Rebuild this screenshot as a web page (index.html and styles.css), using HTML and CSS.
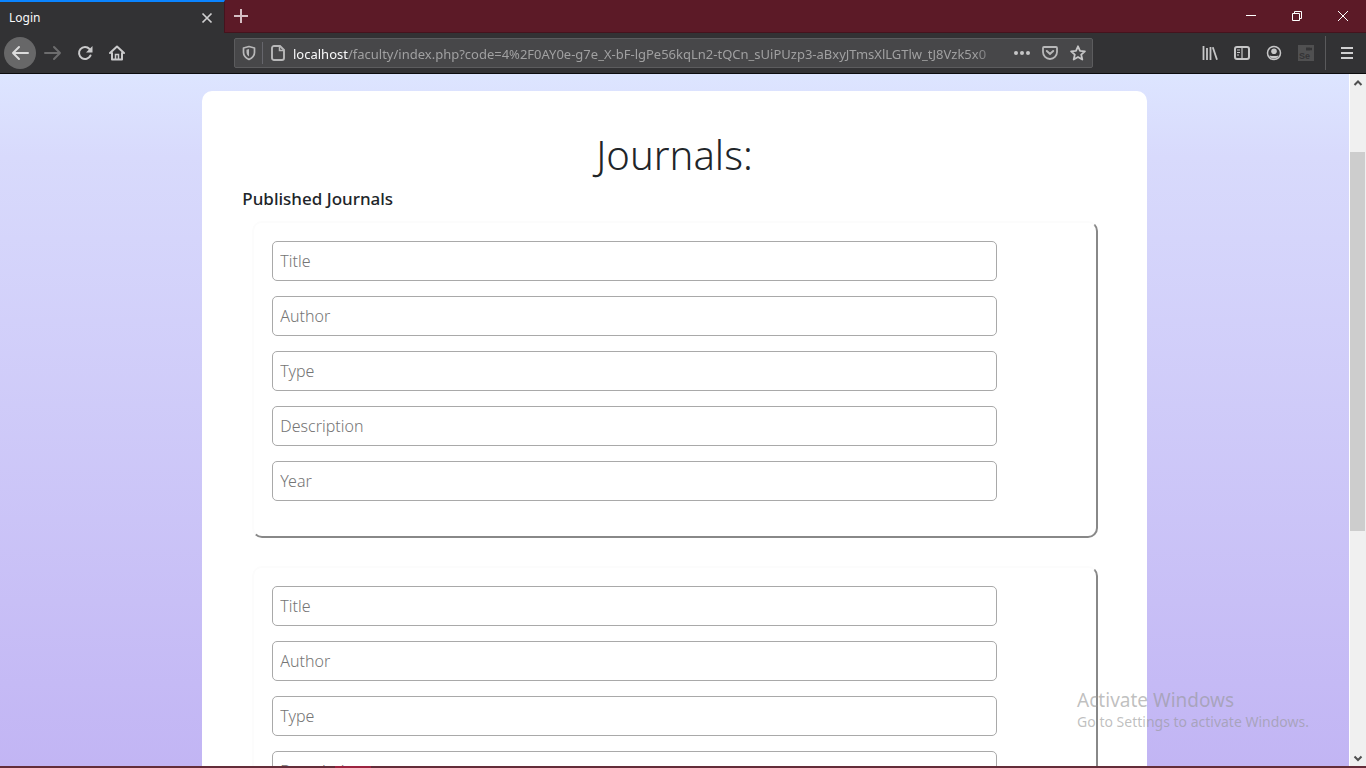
FILE: index.html
```html
<!DOCTYPE html>
<html lang="en">
<head>
<meta charset="utf-8">
<title>Login</title>
<link rel="stylesheet" href="styles.css">
</head>
<body>
<div class="window">
  <header class="titlebar">
    <div class="tab">
      <span class="tab-title">Login</span>
      <button class="tab-close" aria-label="Close tab"><svg width="12" height="12" viewBox="0 0 12 12"><path d="M1.500 1.500l9 9M10.500 1.500l-9 9" stroke="#cfcfd0" stroke-width="1.700" fill="none"/></svg></button>
    </div>
    <button class="new-tab" aria-label="New tab"><svg width="14" height="14" viewBox="0 0 14 14"><path d="M7 0v14M0 7h14" stroke="#d5bfc4" stroke-width="2"/></svg></button>
    <div class="caption">
      <button aria-label="Minimize"><svg width="12" height="12" viewBox="0 0 12 12"><path d="M1 5.500h10" stroke="#fff"/></svg></button>
      <button aria-label="Restore"><svg width="12" height="12" viewBox="0 0 12 12"><path d="M1.500 3.500h7v7h-7zM3.500 3.500v-2h7v7h-2" stroke="#fff" fill="none"/></svg></button>
      <button aria-label="Close"><svg width="12" height="12" viewBox="0 0 12 12"><path d="M1 1l10 10M11 1L1 11" stroke="#fff"/></svg></button>
    </div>
  </header>
  <nav class="toolbar">
    <div class="nav-buttons">
      <button class="back" aria-label="Back"><svg width="18" height="18" viewBox="0 0 18 18"><path d="M17 9H2M8 3L2 9l6 6" stroke="#dcdcdc" stroke-width="2" fill="none" stroke-linecap="round" stroke-linejoin="round"/></svg></button>
      <button aria-label="Forward"><svg width="18" height="18" viewBox="0 0 18 18"><path d="M1 9h15M10 3l6 6-6 6" stroke="#6d6d6e" stroke-width="2" fill="none" stroke-linecap="round" stroke-linejoin="round"/></svg></button>
      <button aria-label="Reload"><svg width="16" height="16" viewBox="0 0 16 16"><path d="M13.500 10.500A6 6 0 1 1 12.500 4" stroke="#cacacb" stroke-width="2" fill="none" stroke-linecap="round"/><path d="M15.500 1v6.500H9z" fill="#cacacb"/></svg></button>
      <button aria-label="Home"><svg width="16" height="16" viewBox="0 0 16 16"><path d="M1 8l7-6.500L15 8M3 8v6.500h10V8" stroke="#cacacb" stroke-width="2" fill="none" stroke-linecap="round" stroke-linejoin="round"/><path d="M6.500 14V9.500h3V14" stroke="#cacacb" stroke-width="1.500" fill="none"/></svg></button>
    </div>
    <div class="address">
      <button class="shield" aria-label="Site protection"><svg width="14" height="16" viewBox="0 0 14 16"><path d="M7 1.500L12.500 3v4.500c0 3.500-2.500 5.500-5.500 7-3-1.500-5.500-3.500-5.500-7V3z" stroke="#b8b8b9" stroke-width="1.700" fill="none" stroke-linejoin="round"/><path d="M7 4v7.500C5 10 4.500 9 4.500 7V4.700z" fill="#b8b8b9"/></svg></button>
      <svg class="page-icon" width="14" height="16" viewBox="0 0 14 16"><path d="M3 1h6l4 4v8a2 2 0 0 1-2 2H3a2 2 0 0 1-2-2V3a2 2 0 0 1 2-2z" stroke="#b8b8b9" stroke-width="1.900" fill="none"/><path d="M8.500 1v4.500H13" stroke="#b8b8b9" stroke-width="1.500" fill="none"/></svg>
      <div class="url"><span class="host">localhost</span>/faculty/index.php?code=4%2F0AY0e-g7e_X-bF-lgPe56kqLn2-tQCn_sUiPUzp3-aBxyJTmsXlLGTlw_tJ8Vzk5x0</div>
      <div class="page-actions">
        <button aria-label="Page actions"><svg width="16" height="16" viewBox="0 0 16 16"><g fill="#c6c6c7"><circle cx="2" cy="8" r="2"/><circle cx="8" cy="8" r="2"/><circle cx="14" cy="8" r="2"/></g></svg></button>
        <button aria-label="Save to Pocket"><svg width="16" height="16" viewBox="0 0 16 16"><path d="M2 2h12a1 1 0 0 1 1 1v4a7 7 0 0 1-14 0V3a1 1 0 0 1 1-1z" stroke="#b8b8b9" stroke-width="1.800" fill="none"/><path d="M4.800 6L8 9l3.200-3" stroke="#b8b8b9" stroke-width="2" fill="none" stroke-linecap="round"/></svg></button>
        <button aria-label="Bookmark"><svg width="16" height="16" viewBox="0 0 16 16"><path d="M8 1.300l2 4.500 4.900.5-3.700 3.300 1.100 4.900L8 12l-4.300 2.500 1.100-4.900L1.100 6.300l4.900-.5z" stroke="#c6c6c7" stroke-width="1.800" fill="none" stroke-linejoin="round"/></svg></button>
      </div>
    </div>
    <div class="tools">
      <button aria-label="Library"><svg width="16" height="16" viewBox="0 0 16 16"><path d="M1.500 1v14M5 3v12M8.500 2v13M10.800 2.200L15 14.800" stroke="#c6c6c7" stroke-width="1.800" fill="none"/></svg></button>
      <button aria-label="Sidebar"><svg width="16" height="16" viewBox="0 0 16 16"><rect x="1" y="2" width="14" height="12" rx="2" stroke="#c6c6c7" stroke-width="2" fill="none"/><path d="M8 2v12M3 5h3M3 7.500h3M3 10h2" stroke="#c6c6c7" stroke-width="1.200"/></svg></button>
      <button aria-label="Account"><svg width="16" height="16" viewBox="0 0 16 16"><circle cx="8" cy="8" r="6.500" stroke="#c6c6c7" stroke-width="1.500" fill="none"/><circle cx="8" cy="6.300" r="2.800" fill="#c6c6c7"/><path d="M3.500 10.500c2 .8 7 .8 9 0-1 4-8 4-9 0z" fill="#c6c6c7"/></svg></button>
      <button class="se" aria-label="Selenium"><svg width="16" height="16" viewBox="0 0 16 16"><rect width="16" height="16" fill="#505051"/><path d="M8 2.500h4.500v.8L14 2.500v3l-1.500-.8v.8H8z" fill="#343436"/><text x="1" y="14" class="se-text">Se</text></svg></button>
      <span class="divider"></span>
      <button aria-label="Menu"><svg width="12" height="14" viewBox="0 0 12 14"><path d="M0 2h12M0 7h12M0 12h12" stroke="#d0d0d1" stroke-width="2"/></svg></button>
    </div>
  </nav>
  <div class="viewport">
    <main class="page">
      <form class="card">
        <h1>Journals:</h1>
        <h2>Published Journals</h2>
        <fieldset class="entry">
          <input type="text" placeholder="Title" aria-label="Title">
          <input type="text" placeholder="Author" aria-label="Author">
          <input type="text" placeholder="Type" aria-label="Type">
          <input type="text" placeholder="Description" aria-label="Description">
          <input type="text" placeholder="Year" aria-label="Year">
        </fieldset>
        <fieldset class="entry">
          <input type="text" placeholder="Title" aria-label="Title">
          <input type="text" placeholder="Author" aria-label="Author">
          <input type="text" placeholder="Type" aria-label="Type">
          <input type="text" placeholder="Description" aria-label="Description">
          <input type="text" placeholder="Year" aria-label="Year">
        </fieldset>
      </form>
    </main>
    <div class="scrollbar">
      <svg width="10" height="18" viewBox="0 0 10 18"><path d="M1.500 11L5 7.500 8.500 11" stroke="#505050" stroke-width="2" fill="none"/></svg>
      <div class="track"><div class="thumb"></div></div>
      <svg width="10" height="18" viewBox="0 0 10 18"><path d="M1.500 8.500L5 12l3.500-3.500" stroke="#505050" stroke-width="2" fill="none"/></svg>
    </div>
  </div>
  <footer class="taskbar"><div class="running"></div></footer>
  <aside class="watermark"><p class="wm-title">Activate Windows</p><p class="wm-text">Go to Settings to activate Windows.</p></aside>
</div>
</body>
</html>
```
FILE: styles.css
```css
* { box-sizing: border-box; }
body { margin: 0; font-family: "Noto Sans", "Open Sans", sans-serif; }
button { display: flex; align-items: center; justify-content: center; padding: 0; border: 0; background: none; font: inherit; }
svg { display: block; flex: none; }
h1, h2, p { margin: 0; }

.window { position: relative; display: flex; flex-direction: column; height: 100vh; overflow: hidden; }

.titlebar { display: flex; flex: none; height: 33px; background: #5c1a27; border-bottom: 1px solid #45131d; }
.tab { display: flex; align-items: center; justify-content: space-between; width: 225px; height: 33px; padding: 0 9px; background: #323234; border-top: 2px solid #0a84ff; border-right: 1px solid #45131d; color: #f9f9fa; font-size: 12px; }
.tab-close { width: 16px; height: 16px; }
.new-tab { width: 32px; height: 32px; }
.caption { display: flex; margin-left: auto; }
.caption button { width: 46px; height: 32px; }

.toolbar { display: flex; flex: none; align-items: center; height: 41px; padding: 0 6px 0 4px; background: #323234; border-bottom: 1px solid #0c0c0d; }
.nav-buttons { display: flex; flex: none; width: 230px; }
.nav-buttons button { width: 32px; height: 32px; }
.nav-buttons button + button { margin-left: 1px; }
.nav-buttons button:nth-child(n+3) { margin-left: 0; }
.nav-buttons .back { border-radius: 50%; background: #676768; }
.address { display: flex; flex: 1; align-items: center; min-width: 0; height: 30px; padding-left: 1px; background: #474749; border: 1px solid #5c5c5e; border-radius: 2px; }
.shield { flex: none; width: 27px; height: 22px; border-right: 1px solid #66666c; }
.page-icon { margin: 0 8px; }
.url { flex: 1; min-width: 0; padding-top: 2px; overflow: hidden; white-space: nowrap; color: #a0a0a1; font-family: "Noto Sans", "Open Sans", sans-serif; font-size: 13px; line-height: 20px; mask-image: linear-gradient(to left, transparent, #000 32px); }
.host { color: #f9f9fa; }
.page-actions { display: flex; padding-left: 2px; }
.page-actions button { width: 28px; height: 28px; }
.tools { display: flex; flex: none; align-items: center; margin-left: 101px; }
.tools button { width: 32px; height: 32px; }
.tools button:last-child { width: 26px; margin-left: 8px; }
.se-text { fill: #343436; font-family: "Liberation Sans", sans-serif; font-size: 9px; font-weight: bold; }
.divider { width: 1px; height: 34px; margin-left: 3px; background: #5a5a5c; }

.viewport { display: flex; flex: 1; min-height: 0; }
.page { flex: 1; padding-top: 17px; overflow: hidden; background: linear-gradient(#dde5ff, #d8dafc 12%, #c2b5f4); }
.card { width: 70%; margin: 0 auto; padding: 40px; background: #fff; border-radius: 10px; }
h1 { color: #212529; font-size: 40px; font-weight: 300; line-height: 48px; text-align: center; }
h2 { margin: 8px 0 10px; color: #212529; font-size: 17px; font-weight: 500; line-height: 24px; }
.entry { display: flex; flex-direction: column; gap: 15px; margin: 0 9px 28px 10px; padding: 18px 18px 35px; background: #fff; border: 2px solid; border-color: #fcfcfc #888 #888 #fcfcfc; border-radius: 10px; }
.entry input { width: 90%; height: 40px; padding: 0 7px; background: #fff; border: 1px solid #a9a9a9; border-radius: 5px; font: 300 16px "Noto Sans", "Open Sans", sans-serif; }
.entry input::placeholder { color: #757575; opacity: 1; }

.scrollbar { display: flex; flex: none; flex-direction: column; align-items: center; width: 17px; background: #f0f0f0; border-left: 1px solid #fff; }
.track { display: grid; flex: 1; align-self: stretch; grid-template-rows: 60fr 379fr 217fr; padding-right: 1px; }
.thumb { grid-row: 2; background: #cdcdcd; }

.taskbar { flex: none; height: 2px; padding-left: 335px; background: #642d39; }
.running { width: 36px; height: 2px; background: #9c2440; }

.watermark { position: absolute; right: 57px; bottom: 36px; color: rgba(150, 150, 150, 0.6); pointer-events: none; }
.wm-title { font-size: 19px; line-height: 24px; }
.wm-text { font-size: 14px; line-height: 20px; }
```
